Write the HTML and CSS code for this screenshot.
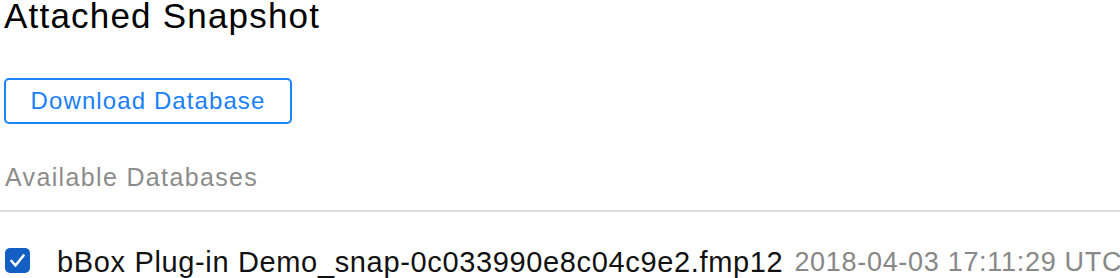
FILE: index.html
```html
<!DOCTYPE html>
<html lang="en">
  <head>
    <meta charset="UTF-8" />
    <meta name="viewport" content="width=device-width, initial-scale=1.0" />
    <title>Attached Snapshot</title>
    <link rel="stylesheet" href="styles.css">
  </head>
  <body>
    <div class="snapshot">
      <h1 class="title">Attached Snapshot</h1>

      <div class="actions">
        <button class="download">Download Database</button>
      </div>

      <div class="list-header">Available Databases</div>

      <ul class="db-list">
        <li class="db-item">
          <span class="check">
            <svg viewBox="0 0 25 25" width="25" height="25">
              <polyline points="6.5,13 10.5,17.5 18.5,7.5" fill="none" stroke="#fff" stroke-width="2.6" stroke-linecap="round" stroke-linejoin="round" />
            </svg>
          </span>
          <span class="db-name">bBox Plug-in Demo_snap-0c033990e8c04c9e2.fmp12</span>
          <span class="db-date">2018-04-03 17:11:29 UTC</span>
        </li>
      </ul>
    </div>
  </body>
</html>
```

FILE: styles.css
```css
/* Resets */
body {
  margin: 0;
  font-family: "Liberation Sans", Arial, sans-serif;
  color: #111;
}
ul {
  margin: 0;
  padding-left: 0;
  list-style: none;
}

/* Heading */
.title {
  margin: 0;
  padding: 0 4px;
  font-size: 35px;
  font-weight: normal;
  line-height: 32px;
  letter-spacing: 1.2px;
  color: #000;
}

/* Button */
.actions {
  padding: 0 4px;
  margin-top: 46px;
}
.download {
  height: 46px;
  width: 288px;
  box-sizing: border-box;
  padding: 0;
  border: 2px solid #1a84fb;
  border-radius: 5px;
  background: #fff;
  color: #1a7ffb;
  font-family: inherit;
  font-size: 24px;
  letter-spacing: 1.1px;
  line-height: 40px;
}

/* List */
.list-header {
  margin-top: 38px;
  padding: 0 5px 18px;
  font-size: 25px;
  line-height: 30px;
  letter-spacing: 1.35px;
  color: #8c8c8c;
  border-bottom: 2px solid #dcdcdc;
}
.db-item {
  display: flex;
  align-items: flex-start;
  margin-top: 33px;
  padding: 0 5px;
  line-height: 34px;
  white-space: nowrap;
}
.check {
  width: 25px;
  height: 25px;
  margin-top: 3px;
  margin-right: 27px;
  border-radius: 5px;
  background: #135fc3;
  display: flex;
}
.db-name {
  font-size: 29px;
  letter-spacing: 0.65px;
  margin-right: 11px;
}
.db-date {
  font-size: 27px;
  letter-spacing: 0.7px;
  color: #888;
}
```
